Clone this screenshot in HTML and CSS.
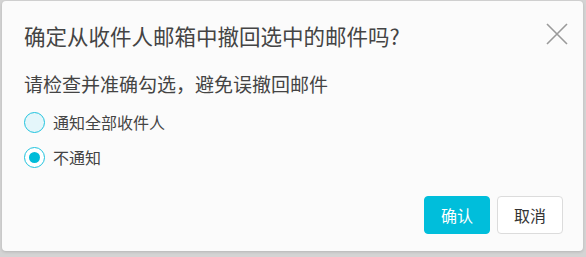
FILE: index.html
```html
<!DOCTYPE html>
<html lang="zh-CN">
<head>
<meta charset="utf-8">
<title>撤回邮件</title>
<link rel="stylesheet" href="styles.css">
</head>
<body>
<div class="dialog">
  <div class="header">
    <h1 class="title">确定从收件人邮箱中撤回选中的邮件吗?</h1>
    <button class="close" aria-label="关闭">
      <svg width="22" height="22" viewBox="0 0 22 22"><path d="M1 1 L21 21 M21 1 L1 21" stroke="#9a9a9a" stroke-width="1.6" fill="none"/></svg>
    </button>
  </div>
  <p class="desc">请检查并准确勾选，避免误撤回邮件</p>
  <div class="options">
    <label class="option"><span class="radio hover"></span><span class="label">通知全部收件人</span></label>
    <label class="option"><span class="radio checked"></span><span class="label">不通知</span></label>
  </div>
  <div class="footer">
    <button class="btn primary">确认</button>
    <button class="btn">取消</button>
  </div>
</div>
</body>
</html>
```
FILE: styles.css
```css
html, body {
  margin: 0;
  padding: 0;
}
body {
  background: #d4d4d4;
  width: 586px;
  height: 257px;
  padding: 1px 0 0 2px;
  box-sizing: border-box;
  font-family: "Noto Sans CJK SC", "Noto Sans", sans-serif;
  color: #444;
}
.dialog {
  width: 581px;
  height: 250px;
  box-sizing: border-box;
  background: #fbfbfb;
  border-radius: 4px;
  box-shadow: 0 1px 3px rgba(0,0,0,0.15);
  padding: 20px 15px 0 22px;
  display: flex;
  flex-direction: column;
}
.header {
  display: flex;
  justify-content: space-between;
  align-items: flex-start;
}
.title {
  margin: 0;
  font-size: 21.5px;
  font-weight: normal;
  line-height: 30px;
  color: #444;
}
.close {
  border: none;
  background: none;
  padding: 0;
  margin-top: 2px;
  width: 22px;
  height: 22px;
  display: flex;
}
.desc {
  margin: 20px 0 0 0;
  font-size: 19px;
  line-height: 26px;
  color: #444;
}
.options {
  margin-top: 13px;
  display: flex;
  flex-direction: column;
  gap: 11px;
}
.option {
  display: flex;
  align-items: center;
  height: 24px;
  gap: 8px;
  font-size: 16px;
  color: #444;
}
.radio {
  width: 21px;
  height: 21px;
  box-sizing: border-box;
  border-radius: 50%;
  border: 1.2px solid #1ec3de;
  background: #fff;
  display: flex;
  align-items: center;
  justify-content: center;
}
.radio.hover {
  background: #e4f6fa;
}
.radio.checked::after {
  content: "";
  width: 11px;
  height: 11px;
  border-radius: 50%;
  background: #00bcd9;
}
.footer {
  margin-top: auto;
  margin-bottom: 17px;
  margin-right: 5px;
  display: flex;
  justify-content: flex-end;
  gap: 7px;
}
.btn {
  width: 66px;
  height: 38px;
  border-radius: 4px;
  border: 1px solid #dcdcdc;
  background: #fff;
  color: #333;
  font-family: "Noto Sans CJK SC", "Noto Sans", sans-serif;
  font-size: 16px;
  padding: 0;
}
.btn.primary {
  background: #00bedb;
  border-color: #00bedb;
  color: #fff;
}
```
